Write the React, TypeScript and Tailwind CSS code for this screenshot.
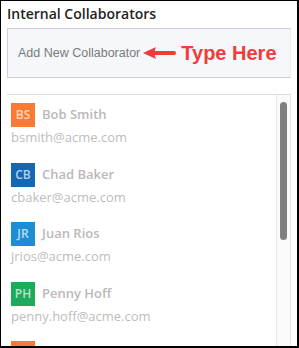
const people = [
  { initials: "BS", name: "Bob Smith", email: "bsmith@acme.com", color: "bg-[#fb7a33]" },
  { initials: "CB", name: "Chad Baker", email: "cbaker@acme.com", color: "bg-[#1467b3]" },
  { initials: "JR", name: "Juan Rios", email: "jrios@acme.com", color: "bg-[#1c8fd4]" },
  { initials: "PH", name: "Penny Hoff", email: "penny.hoff@acme.com", color: "bg-[#1daa5b]" },
];

function Arrow() {
  return (
    <svg width="35" height="14" viewBox="0 0 35 14" className="shrink-0">
      <path d="M12 7 H32" stroke="#f23b3b" strokeWidth="4" strokeLinecap="round" />
      <path d="M1 7 L14 1 Q11 7 14 13 Z" fill="#f23b3b" />
    </svg>
  );
}

export default function App() {
  return (
    <div
      className="flex h-[348px] w-[299px] flex-col overflow-hidden border-l border-t border-r-2 border-b-2 border-black bg-white pl-[6px] pr-[6px]"
      style={{ fontFamily: "'Open Sans', sans-serif" }}
    >
      <h1 className="mt-[3px] text-[14px] font-semibold leading-[20px] text-[#1f1f1f]">
        Internal Collaborators
      </h1>

      <div className="mt-[4px] flex h-[50px] items-center border border-[#cfcfcf] border-r-[#ececec] bg-[#f5f7fb] pl-[10px]">
        <span
          className="text-[12.5px] text-[#7a7a7a]"
          style={{ fontFamily: "'Liberation Sans', Arial, sans-serif" }}
        >
          Add New Collaborator
        </span>
        <span className="ml-[2px] flex">
          <Arrow />
        </span>
        <span
          className="ml-[4px] text-[20px] font-bold text-[#f23b3b]"
          style={{ fontFamily: "'Liberation Sans', Arial, sans-serif" }}
        >
          Type Here
        </span>
      </div>

      <div className="mt-[16px] flex min-h-0 flex-1 border-t border-[#dcdcdc]">
        <div className="flex-1 overflow-hidden pl-[4px] pt-[8px]">
          {people.map((p) => (
            <div key={p.email} className="h-[59.5px]">
              <div className="flex h-[24px] items-center">
                <div
                  className={`flex h-[24px] w-[24px] items-center justify-center text-[12px] font-semibold text-white/70 ${p.color}`}
                >
                  {p.initials}
                </div>
                <span className="ml-[7px] text-[13px] font-semibold text-[#bcb8b8]">{p.name}</span>
              </div>
              <div className="mt-[1px] text-[13px] leading-[18px] text-[#c0bcbc]">{p.email}</div>
            </div>
          ))}
          <div className="h-[24px] w-[24px] bg-[#fb7a33]" />
        </div>
        <div className="w-[15px] shrink-0 border-x border-[#e8e8e8] bg-[#fafafa]">
          <div className="mx-auto mt-[7px] h-[138px] w-[7px] rounded-full bg-[#808080]" />
        </div>
      </div>
    </div>
  );
}
